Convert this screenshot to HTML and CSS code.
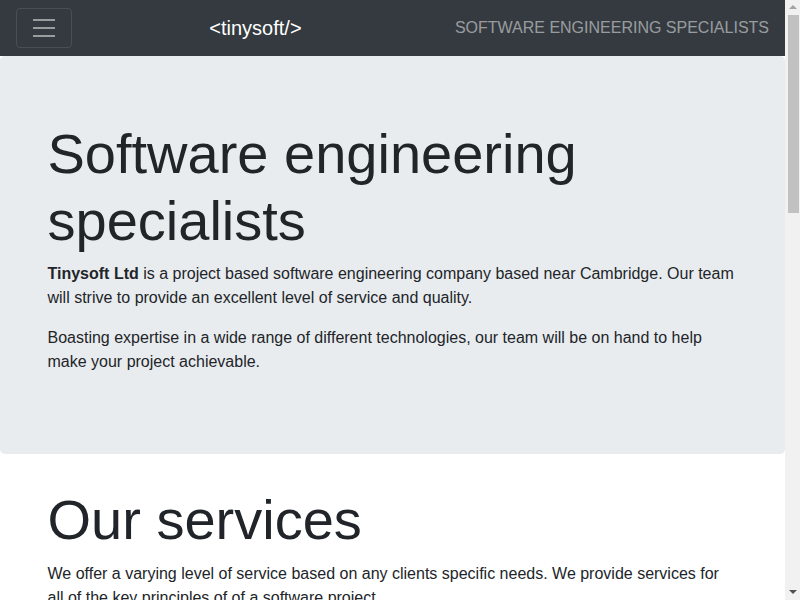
FILE: index.html
```html
<!DOCTYPE html>
<html lang="en">
<head>
<meta charset="utf-8">
<title>Tinysoft</title>
<link rel="stylesheet" href="styles.css">
</head>
<body>
<div class="page">
<nav class="navbar">
  <button class="toggler" type="button" aria-label="Toggle navigation">
    <svg width="30" height="30" viewBox="0 0 30 30"><path stroke="rgba(255,255,255,0.5)" stroke-width="2" stroke-linecap="butt" d="M4 7h22M4 15h22M4 23h22"/></svg>
  </button>
  <a class="brand" href="#">&lt;tinysoft/&gt;</a>
  <span class="navbar-text">SOFTWARE ENGINEERING SPECIALISTS</span>
</nav>
<div class="jumbotron">
  <div class="container">
    <h1 class="display">Software engineering specialists</h1>
    <p><strong>Tinysoft Ltd</strong> is a project based software engineering company based near Cambridge. Our team will strive to provide an excellent level of service and quality.</p>
    <p>Boasting expertise in a wide range of different technologies, our team will be on hand to help make your project achievable.</p>
  </div>
</div>
<div class="container">
  <h1 class="display">Our services</h1>
  <p>We offer a varying level of service based on any clients specific needs. We provide services for all of the key principles of of a software project.</p>
  <h2>Design</h2>
  <p>We work closely with you to understand your requirements and design a solution that fits your needs, your budget and your timescales.</p>
  <h2>Development</h2>
  <p>Our engineers build robust, maintainable software using modern tools and well established engineering practices.</p>
  <h2>Testing</h2>
  <p>Every project is thoroughly tested to ensure it works as expected, from unit tests through to full system and acceptance testing.</p>
  <h2>Deployment</h2>
  <p>We can help you get your software into the hands of your users, whether that is on the web, on desktop or on mobile devices.</p>
  <h2>Support</h2>
  <p>Once your project is live we remain on hand to provide ongoing support, maintenance and improvements as your needs change.</p>
  <h1 class="display">Contact us</h1>
  <p>If you would like to discuss a project with us, please get in touch and a member of our team will be happy to help.</p>
  <p>Tinysoft Ltd, Cambridge, United Kingdom.</p>
</div>
<footer class="footer">
  <div class="container">
    <p>&copy; Tinysoft Ltd</p>
  </div>
</footer>
</div>
<div class="scrollbar" aria-hidden="true">
  <span class="arrow arrow-up"></span>
  <span class="thumb"></span>
  <span class="arrow arrow-down"></span>
</div>
</body>
</html>
```
FILE: styles.css
```css
html, body {
  margin: 0;
  padding: 0;
}
html {
  scrollbar-width: none;
}
html::-webkit-scrollbar {
  display: none;
}
body {
  font-family: "Liberation Sans", Arial, sans-serif;
  font-size: 16px;
  line-height: 1.5;
  color: #212529;
  background: #fff;
}
.page {
  margin-right: 15px;
}
.navbar {
  display: flex;
  align-items: center;
  justify-content: space-between;
  padding: 8px 16px;
  background: #343a40;
}
.toggler {
  display: flex;
  align-items: center;
  justify-content: center;
  width: 56px;
  height: 40px;
  padding: 4px 12px;
  background: transparent;
  border: 1px solid rgba(255, 255, 255, 0.1);
  border-radius: 4px;
  box-sizing: border-box;
}
.toggler svg {
  display: block;
}
.brand {
  display: inline-block;
  padding: 5px 0;
  margin-right: 16px;
  font-size: 20px;
  line-height: 30px;
  color: #fff;
  text-decoration: none;
}
.navbar-text {
  padding: 8px 0;
  color: rgba(255, 255, 255, 0.5);
}
.container {
  max-width: 720px;
  margin: 0 auto;
  padding: 0 15px;
  box-sizing: border-box;
}
.jumbotron {
  padding: 64px 32px;
  margin-bottom: 32px;
  background: #e9ecef;
  border-radius: 4.8px;
}
.display {
  margin: 0 0 8px;
  font-size: 56px;
  font-weight: 300;
  line-height: 1.2;
}
p {
  margin: 0 0 16px;
}
h2 {
  margin: 24px 0 8px;
  font-size: 32px;
  font-weight: 500;
  line-height: 1.2;
}
.footer {
  padding: 32px 0 40px;
  margin-top: 48px;
  background: #f8f9fa;
}
.scrollbar {
  position: fixed;
  top: 0;
  right: 0;
  width: 15px;
  height: 100vh;
  background: #f1f1f1;
  display: flex;
  flex-direction: column;
  align-items: center;
}
.arrow {
  width: 0;
  height: 0;
  border-left: 4px solid transparent;
  border-right: 4px solid transparent;
  flex: none;
}
.arrow-up {
  margin-top: 5px;
  border-bottom: 4px solid #a3a3a3;
}
.arrow-down {
  margin-top: auto;
  margin-bottom: 6px;
  border-top: 4px solid #505050;
}
.thumb {
  display: block;
  width: 11px;
  height: 198px;
  margin-top: 6px;
  margin-left: 2px;
  background: #c1c1c1;
}
```
